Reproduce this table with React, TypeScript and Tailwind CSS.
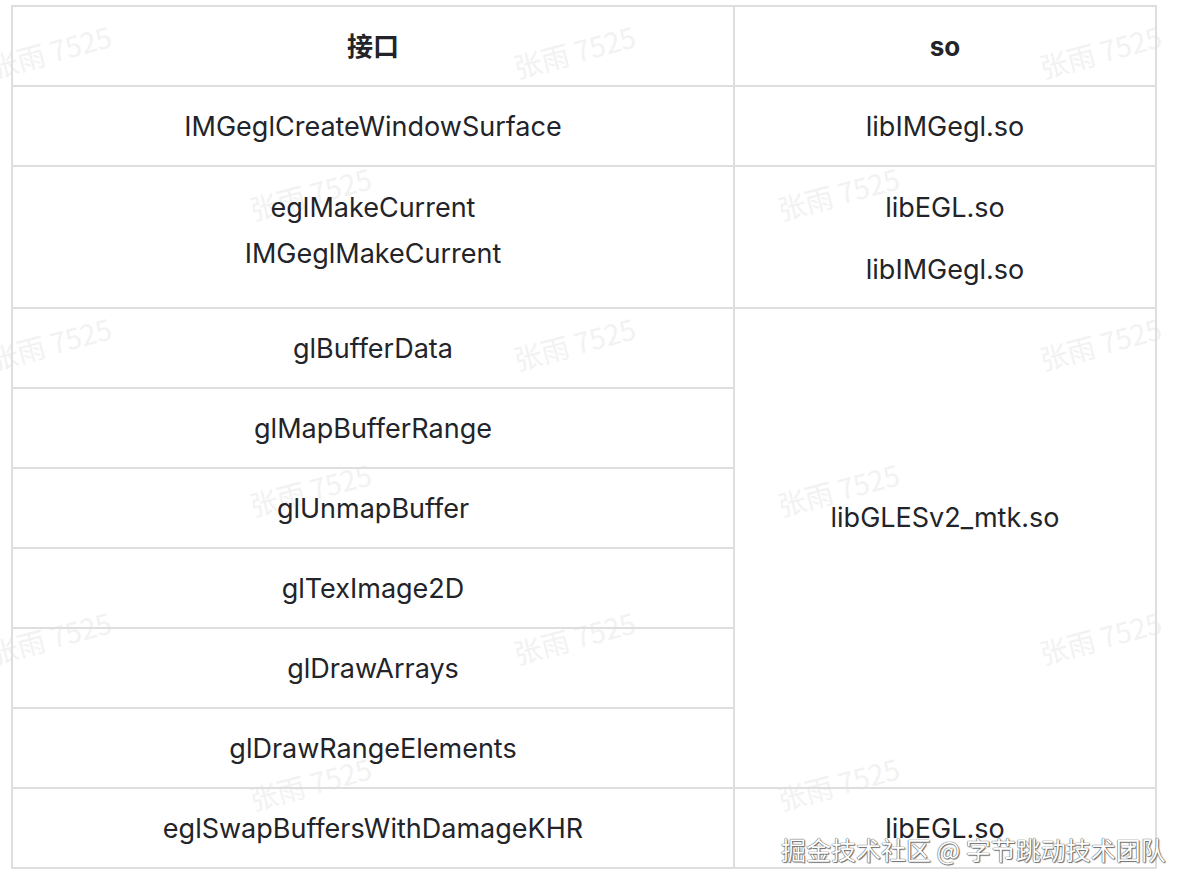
import React from 'react'

const marks: [number, number][] = [
  [-12, 30], [512, 30], [1038, 30],
  [248, 172], [776, 172],
  [-12, 322], [512, 322], [1038, 322],
  [248, 468], [776, 468],
  [-12, 616], [512, 616], [1038, 616],
  [248, 762], [776, 762],
]

const glRows = [
  'glBufferData',
  'glMapBufferRange',
  'glUnmapBuffer',
  'glTexImage2D',
  'glDrawArrays',
  'glDrawRangeElements',
]

const cell = 'border-2 border-[#dedede] text-center pt-[2px]'

const App = () => {
  return (
    <div className="relative w-[1192px] h-[888px] overflow-hidden bg-white text-[#222429] font-['Inter','Noto_Sans_CJK_SC',sans-serif]">
      {/* faint name watermarks, under the table text */}
      {marks.map(([x, y]) => (
        <div
          key={`${x}-${y}`}
          className="absolute pointer-events-none text-[28px] text-[#f2f2f2] -rotate-[15deg] whitespace-nowrap font-['Noto_Sans_CJK_SC',sans-serif]"
          style={{ left: x, top: y }}
        >
          张雨 7525
        </div>
      ))}

      <div className="relative pt-[5px] pl-[11px]">
        <table className="border-collapse table-fixed w-[1144px] text-[27px] leading-[46px]">
          <colgroup>
            <col className="w-[722px]" />
            <col className="w-[422px]" />
          </colgroup>
          <tbody>
            <tr className="h-[80px]">
              <th className={`${cell} font-bold text-[26px]`}>接口</th>
              <th className={`${cell} font-bold text-[26px]`}>so</th>
            </tr>
            <tr className="h-[80px]">
              <td className={cell}>IMGeglCreateWindowSurface</td>
              <td className={cell}>libIMGegl.so</td>
            </tr>
            <tr className="h-[142px]">
              <td className={`${cell} align-top pt-[18px]`}>
                <div>eglMakeCurrent</div>
                <div>IMGeglMakeCurrent</div>
              </td>
              <td className={`${cell} align-top pt-[18px]`}>
                <p>libEGL.so</p>
                <p className="mt-[16px]">libIMGegl.so</p>
              </td>
            </tr>
            {glRows.map((name, i) => (
              <tr key={name} className="h-[80px]">
                <td className={cell}>{name}</td>
                {i === 0 ? (
                  <td rowSpan={6} className={`${cell} align-top pt-[186px]`}>
                    libGLESv2_mtk.so
                  </td>
                ) : null}
              </tr>
            ))}
            <tr className="h-[80px]">
              <td className={cell}>eglSwapBuffersWithDamageKHR</td>
              <td className={cell}>libEGL.so</td>
            </tr>
          </tbody>
        </table>
      </div>

      <div className="absolute left-[781px] top-[831px] text-[25px] leading-[36px] text-white whitespace-nowrap font-['Noto_Sans_CJK_SC',sans-serif] [text-shadow:0_0_1px_#444,0_0_1px_#555,1px_1px_1px_#777]">
        掘金技术社区 @ 字节跳动技术团队
      </div>
    </div>
  )
}

export default App
